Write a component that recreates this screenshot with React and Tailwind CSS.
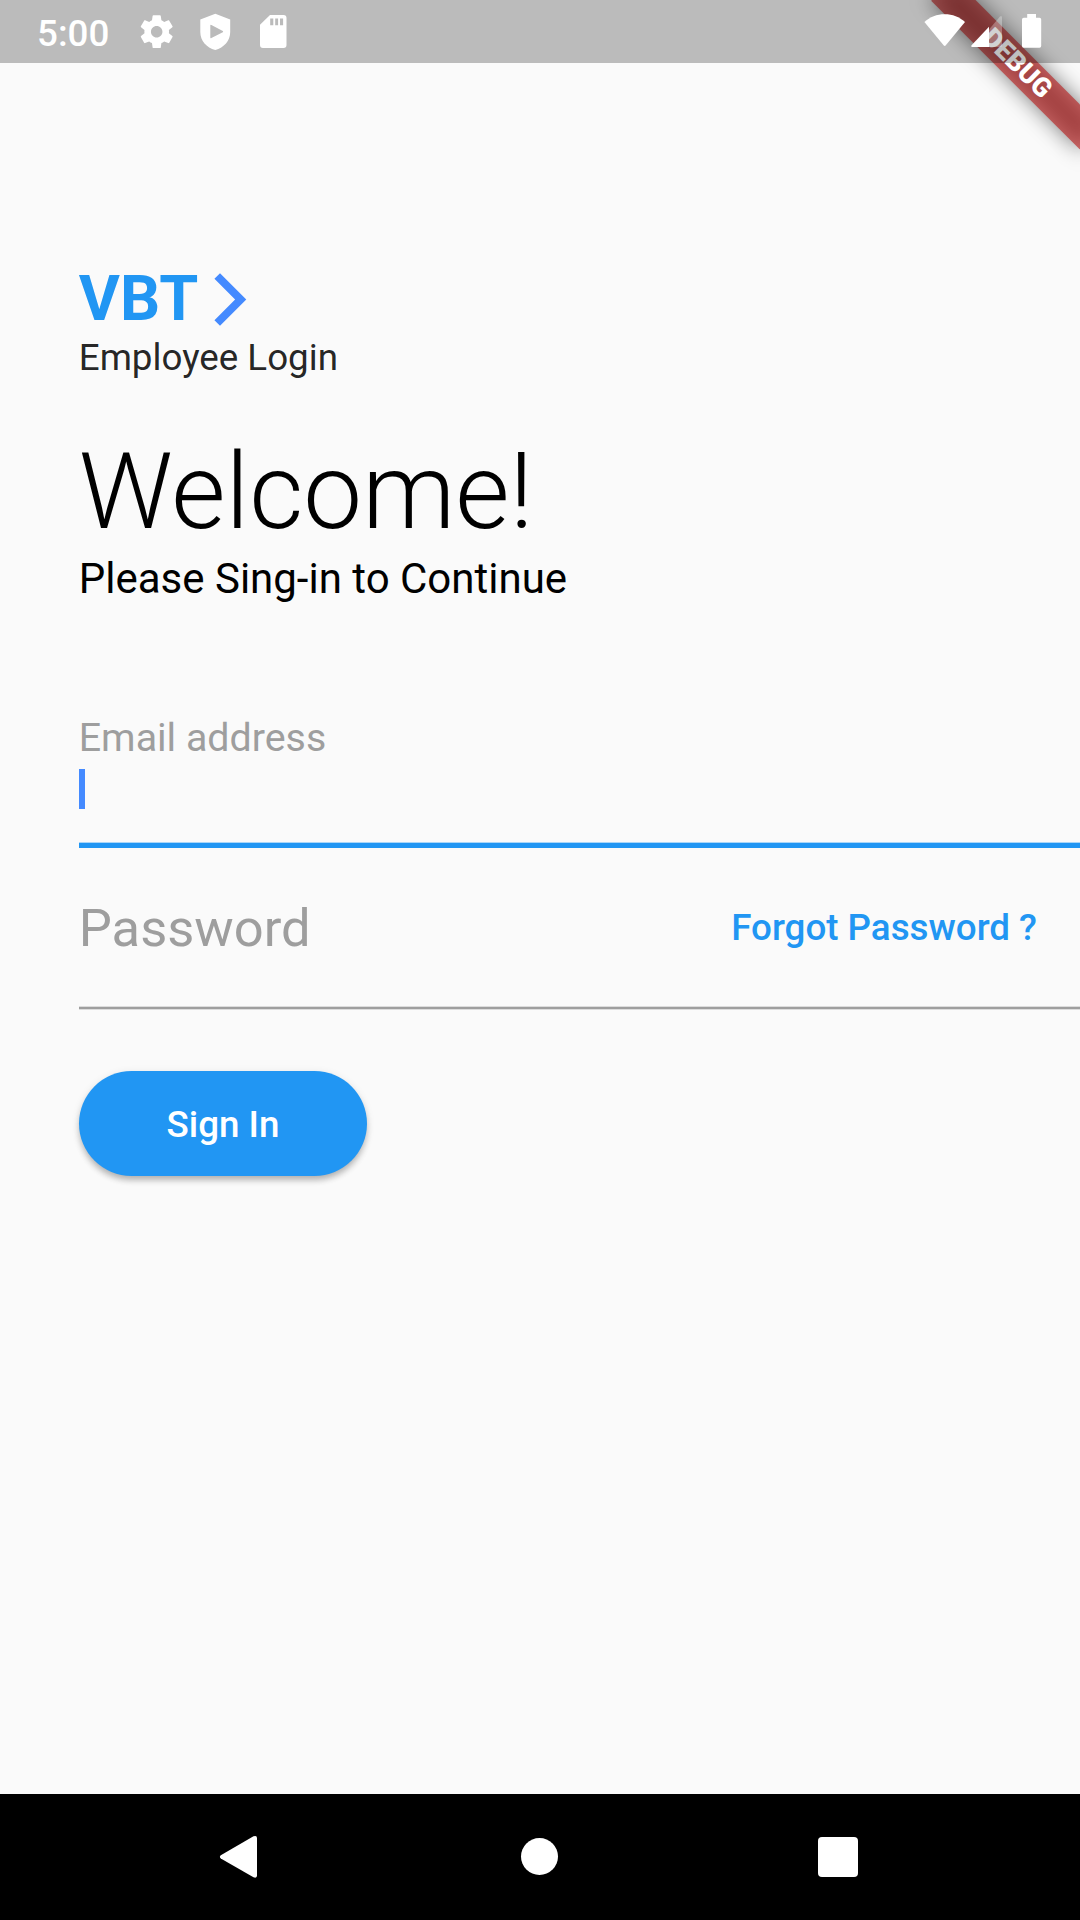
function StatusBar() {
  return (
    <header className="relative z-10 flex h-[63px] items-start bg-black/25 text-white">
      <span className="ml-[37px] mt-[12px] w-[73px] whitespace-nowrap text-[36.75px] font-medium leading-[43px]">
        5:00
      </span>
      <svg className="ml-[27.3px] mt-[11.8px] size-[39.375px] shrink-0" viewBox="0 0 24 24" fill="currentColor">
        <path d="M19.43 12.98c.04-.32.07-.64.07-.98s-.03-.66-.07-.98l2.11-1.65c.19-.15.24-.42.12-.64l-2-3.46c-.12-.22-.39-.3-.61-.22l-2.49 1c-.52-.4-1.08-.73-1.69-.98l-.38-2.65C14.46 2.18 14.25 2 14 2h-4c-.25 0-.46.18-.49.42l-.38 2.65c-.61.25-1.17.59-1.69.98l-2.49-1c-.23-.09-.49 0-.61.22l-2 3.46c-.13.22-.07.49.12.64l2.11 1.65c-.04.32-.07.65-.07.98s.03.66.07.98l-2.11 1.65c-.19.15-.24.42-.12.64l2 3.46c.12.22.39.3.61.22l2.49-1c.52.4 1.08.73 1.69.98l.38 2.65c.03.24.24.42.49.42h4c.25 0 .46-.18.49-.42l.38-2.65c.61-.25 1.17-.59 1.69-.98l2.49 1c.23.09.49 0 .61-.22l2-3.46c.12-.22.07-.49-.12-.64l-2.11-1.65zM12 15.5c-1.93 0-3.5-1.57-3.5-3.5s1.57-3.5 3.5-3.5 3.5 1.57 3.5 3.5-1.57 3.500-3.500 3.500z" />
      </svg>
      <svg className="ml-[23px] mt-[13px] h-[38px] w-[31px] shrink-0" viewBox="0 0 31 38" fill="currentColor" fillRule="evenodd">
        <path d="M15.3.7 30.2 6.6V19C30.2 28 24 34.500 15.300 37 6.500 34.500.3 28 .3 19V6.600ZM10.300 12.500V24.500Q10.300 25.600 11.400 25L22.800 19.200Q23.600 18.500 22.800 17.900L11.400 11.900Q10.300 11.500 10.300 12.500Z" />
      </svg>
      <svg className="ml-[29px] mt-[15px] h-[33px] w-[27px] shrink-0" viewBox="0 0 27 33" fill="currentColor" fillRule="evenodd">
        <path d="M10 0H23.500Q26.500 0 26.500 3V30Q26.500 33 23.500 33H3Q0 33 0 30V9.700ZM10.200 3.500V10.200H13.300V3.500ZM15.200 3.500V10.200H18.100V3.500ZM20 3.500V10.200H23.100V3.500Z" />
      </svg>
      <div className="ml-auto mr-[38px] mt-[14px] flex">
        <svg className="h-[34px] w-[42px]" viewBox="0 0 42 34" fill="currentColor">
          <path d="M.4 8C5.800 2.800 13 .2 20.700.2S35.500 2.800 41 8L21.600 31.500Q20.700 32.400 19.800 31.500Z" />
        </svg>
        <svg className="ml-[5px] h-[34px] w-[32px]" viewBox="0 0 32 34" fill="currentColor">
          <path fillOpacity=".3" d="M18 15.500 29 2.500Q31 1 31 4V31.500Q31 33 29.500 33H18Z" />
          <path d="M18 12.700V33H1.300Q-.5 33 .6 31.200Z" />
        </svg>
        <svg className="ml-[19px] h-[34px] w-[20px]" viewBox="0 0 20 34" fill="currentColor">
          <path d="M5.200 0H14V3.700H17.500Q19.200 3.700 19.200 5.400V32Q19.200 33.800 17.500 33.800H1.800Q0 33.800 0 32V5.400Q0 3.700 1.800 3.700H5.200Z" />
        </svg>
      </div>
    </header>
  );
}

function DebugBanner() {
  return (
    <div className="absolute left-[975px] top-[73.5px] h-[31.5px] w-[210px] origin-[105px_-73.5px] rotate-45">
      <div className="absolute inset-0 bg-black/50 blur-[10.4px]" />
      <div className="relative h-[31.5px] bg-[#b71c1c]/63 text-center text-[26.775px] font-black leading-[31.5px] text-white">
        DEBUG
      </div>
    </div>
  );
}

function NavigationBar() {
  return (
    <nav className="flex h-[126px] items-center bg-black text-white">
      <svg className="ml-[219px] h-[44px] w-[39px]" viewBox="0 0 39 44" fill="currentColor">
        <path d="M1.800 20.200 34.500 1.300Q38 0 38 3V40.500Q38 43.500 34.500 42.300L1.800 23.600Q0 21.900 1.800 20.200Z" />
      </svg>
      <div className="mb-px ml-[263px] size-[37px] rounded-full bg-white" />
      <div className="ml-[260px] size-[40px] rounded-[4px] bg-white" />
    </nav>
  );
}

export default function App() {
  return (
    <div className="relative flex h-[1920px] w-[1080px] flex-col overflow-hidden bg-[#fafafa] font-['Roboto',sans-serif] text-black">
      <DebugBanner />
      <StatusBar />
      <main className="flex flex-1 flex-col pl-[78.75px] pt-[198px]">
        <div className="flex h-[75px]">
          <span className="w-[120.65px] text-[63px] font-bold leading-[75px] text-[#2196f3]">VBT</span>
          <svg className="mt-[6.8px] size-[63px]" viewBox="0 0 24 24" fill="#448aff">
            <path d="M5.880 4.120 13.760 12l-7.880 7.880L8 22l10-10L8 2z" />
          </svg>
        </div>
        <p className="text-[36.75px] leading-[43px] text-black/87">Employee Login</p>
        <h1 className="mt-[52px] text-[105px] font-light leading-[123px]">Welcome!</h1>
        <p className="text-[42px] leading-[49px]">Please Sing-in to Continue</p>

        <label className="mt-[112px] text-[39.375px] leading-[46px] text-[#9e9e9e]">Email address</label>
        <div className="mt-[8px] h-[39.5px] w-[6px] bg-[#448aff]" />
        <div className="mt-[33.5px] h-[6px] border-t border-[#a9d6f9] bg-[#2196f3]" />

        <div className="mt-[49px] flex h-[62px] items-center justify-between pr-[43px]">
          <label className="text-[52.5px] leading-[62px] text-[#9e9e9e]">Password</label>
          <a className="text-[36.75px] font-medium leading-[62px] text-[#2196f3]">Forgot Password ?</a>
        </div>
        <div className="mt-[47px] h-[4px] border-y border-[#dcdcdc] bg-[#9e9e9e]" />

        <button className="mt-[61px] h-[105px] w-[288.5px] rounded-full bg-[#2196f3] pt-[2px] text-[36.75px] font-medium leading-[43px] text-white shadow-[0_5px_6px_-1px_rgba(0,0,0,0.24),0_2px_8px_rgba(0,0,0,0.1)]">
          Sign In
        </button>
      </main>
      <NavigationBar />
    </div>
  );
}
